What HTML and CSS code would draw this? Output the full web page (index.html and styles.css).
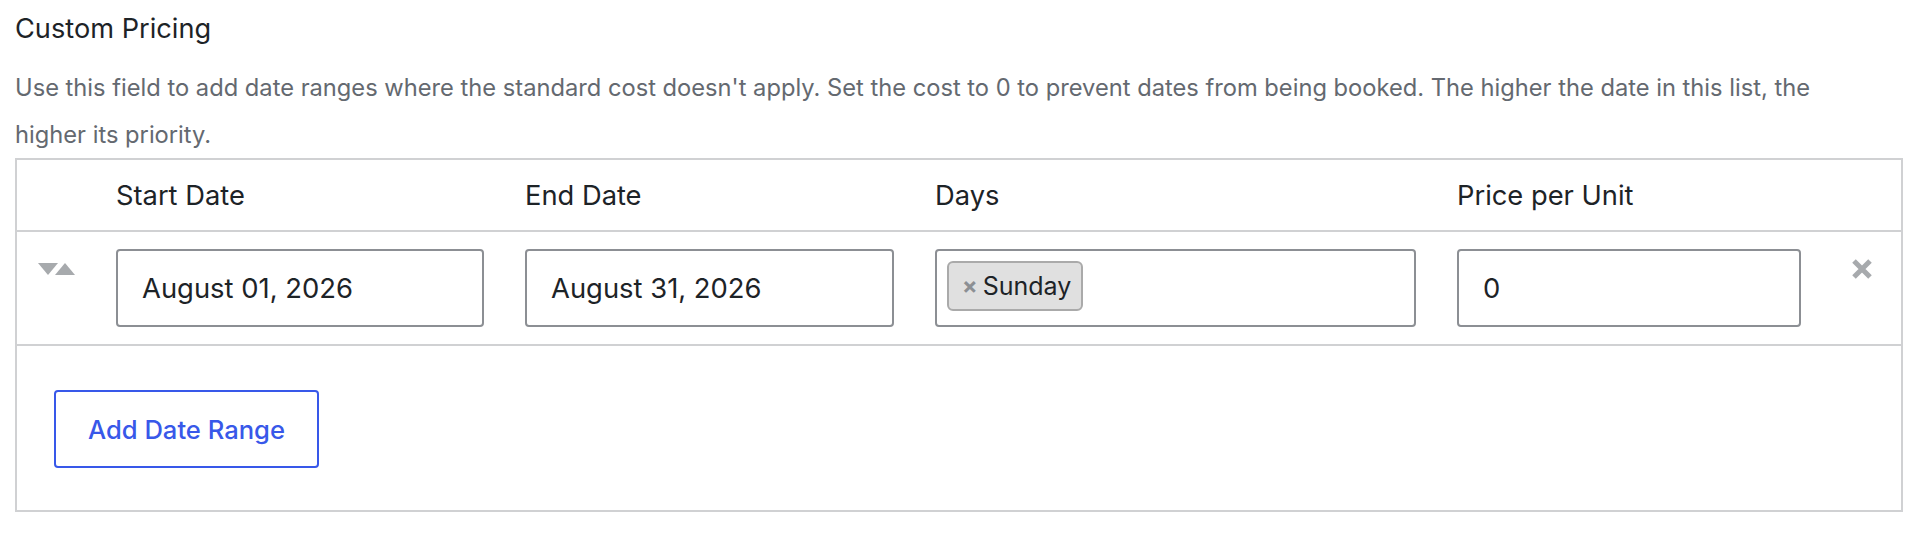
FILE: index.html
```html
<!DOCTYPE html>
<html lang="en">
<head>
<meta charset="utf-8">
<title>Custom Pricing</title>
<link rel="stylesheet" href="styles.css">
</head>
<body>
<div class="field">
  <h2 class="field-title">Custom Pricing</h2>
  <p class="field-desc">Use this field to add date ranges where the standard cost doesn't apply. Set the cost to 0 to prevent dates from being booked. The higher the date in this list, the higher its priority.</p>
  <div class="pricing-table">
    <div class="grid-row head-row">
      <div class="cell"></div>
      <div class="cell head">Start Date</div>
      <div class="cell head">End Date</div>
      <div class="cell head">Days</div>
      <div class="cell head">Price per Unit</div>
      <div class="cell"></div>
    </div>
    <div class="grid-row body-row">
      <div class="cell sort">
        <span class="tri tri-down"></span><span class="tri tri-up"></span>
      </div>
      <div class="cell"><div class="input">August 01, 2026</div></div>
      <div class="cell"><div class="input">August 31, 2026</div></div>
      <div class="cell"><div class="input multi"><span class="chip"><span class="chip-x">×</span>Sunday</span></div></div>
      <div class="cell"><div class="input">0</div></div>
      <div class="cell remove">
        <svg width="22" height="22" viewBox="0 0 22 22" aria-hidden="true"><path d="M3 3 L19 19 M19 3 L3 19" stroke="#a7aaad" stroke-width="5" stroke-linecap="butt"/></svg>
      </div>
    </div>
    <div class="foot">
      <button class="btn" type="button">Add Date Range</button>
    </div>
  </div>
</div>
</body>
</html>
```

FILE: styles.css
```css
html, body {
  margin: 0;
  padding: 0;
  background: #ffffff;
}

body {
  font-family: "Inter", "Liberation Sans", Arial, sans-serif;
  color: #1d2327;
}

.field {
  padding: 11px 17px 0 15px;
}

.field-title {
  margin: 0;
  font-size: 27.2px;
  font-weight: 400;
  line-height: 36px;
  color: #1d2327;
}

.field-desc {
  margin: 17px 0 0 0;
  max-width: 1840px;
  font-size: 23.7px;
  line-height: 47px;
  color: #646970;
}

.pricing-table {
  border: 2px solid #d0d1d3;
  box-sizing: border-box;
  width: 1888px;
}

.grid-row {
  display: grid;
  grid-template-columns: 58px 368px 369px 481px 344px 1fr;
  column-gap: 41px;
  align-items: center;
}

.head-row {
  height: 70px;
  border-bottom: 2px solid #d0d1d3;
}

.head {
  font-size: 27.3px;
  color: #1d2327;
}

.body-row {
  padding: 17px 0 17px 0;
  border-bottom: 2px solid #d0d1d3;
}

.input {
  box-sizing: border-box;
  height: 78px;
  border: 2px solid #8c8f94;
  border-radius: 4px;
  padding: 0 24px;
  display: flex;
  align-items: center;
  font-size: 27.4px;
  color: #1d2327;
}

.input.multi {
  align-items: flex-start;
  padding: 10px 10px;
}

.chip {
  display: inline-flex;
  align-items: center;
  box-sizing: border-box;
  height: 50px;
  padding: 0 10px 0 13px;
  background: #e0e0e0;
  border: 2px solid #aaaaaa;
  border-radius: 6px;
  font-size: 25px;
  color: #1d2327;
}

.chip-x {
  color: #8c8f94;
  font-weight: 700;
  font-size: 23px;
  margin-right: 5px;
}

.sort {
  align-self: start;
  padding-top: 14px;
  padding-left: 21px;
  display: flex;
  align-items: center;
}

.tri {
  display: inline-block;
  width: 0;
  height: 0;
  border-left: 10px solid transparent;
  border-right: 10px solid transparent;
}

.tri-down {
  border-top: 12px solid #a7aaad;
}

.tri-up {
  border-bottom: 12px solid #a7aaad;
  margin-left: -3px;
}

.remove {
  align-self: start;
  padding-top: 9px;
  padding-left: 9px;
}

.remove svg {
  display: block;
}

.foot {
  padding: 44px 0 42px 37px;
}

.btn {
  box-sizing: border-box;
  height: 78px;
  width: 265px;
  background: #ffffff;
  border: 2px solid #3858e9;
  border-radius: 4px;
  color: #3858e9;
  font-family: "Inter", "Liberation Sans", Arial, sans-serif;
  font-size: 25.6px;
  font-weight: 500;
  cursor: pointer;
}
```
